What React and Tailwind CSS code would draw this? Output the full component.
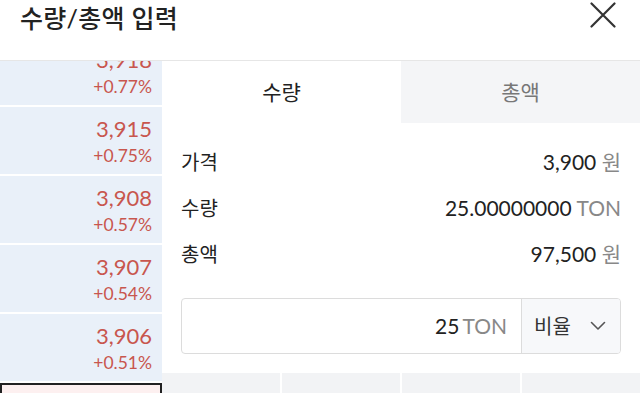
import React from 'react';

const rows = [
    { price: '3,918', rate: '+0.77%' },
    { price: '3,915', rate: '+0.75%' },
    { price: '3,908', rate: '+0.57%' },
    { price: '3,907', rate: '+0.54%' },
    { price: '3,906', rate: '+0.51%' },
];

const summary = [
    { label: '가격', value: '3,900', unit: '원' },
    { label: '수량', value: '25.00000000', unit: 'TON' },
    { label: '총액', value: '97,500', unit: '원' },
];

export default function App() {
    return (
        <div className="w-[640px] h-[393px] overflow-hidden bg-white text-[#222] font-['Lato','Noto_Sans_CJK_KR',sans-serif]">
            {/* header */}
            <div className="h-[61px] border-b border-[#e6e6e6] flex items-start justify-between pl-5 pr-[24px]">
                <h1 className="text-[25px] leading-[36px] font-medium tracking-[0.3px]">수량/총액 입력</h1>
                <svg width="26" height="26" viewBox="0 0 26 26" className="mt-[2px]">
                    <path d="M1.5 1.5 L24.5 24.5 M24.5 1.5 L1.5 24.5" stroke="#333" strokeWidth="2.2" strokeLinecap="round" />
                </svg>
            </div>

            <div className="flex h-[332px] overflow-hidden">
                {/* order book */}
                <div className="w-[162px] shrink-0 flex flex-col gap-[2px] overflow-hidden">
                    {rows.map((r, i) => (
                        <div key={r.price} className={`h-[67px] shrink-0 bg-[#e9f0f9] flex flex-col items-end pt-[10px] pr-[10px] text-[#c8564e] ${i === 0 ? '-mt-[23px]' : ''}`}>
                            <span className="text-[22px] leading-[24px]">{r.price}</span>
                            <span className="text-[17.5px] leading-[29px]">{r.rate}</span>
                        </div>
                    ))}
                    <div className="h-[67px] shrink-0 bg-[#fdf0f0] border-2 border-[#222]" />
                </div>

                {/* form */}
                <div className="flex-1 flex flex-col overflow-hidden">
                    <div className="h-[62px] shrink-0 flex">
                        <div className="flex-1 flex items-center justify-center text-[21px] text-[#222]">수량</div>
                        <div className="flex-1 flex items-center justify-center text-[21px] text-[#777] bg-[#f4f5f7]">총액</div>
                    </div>

                    <div className="shrink-0 px-[19px] pt-[16px]">
                        {summary.map(s => (
                            <div key={s.label} className="h-[46px] flex items-center justify-between">
                                <span className="text-[20px]">{s.label}</span>
                                <span className="text-[21px]">
                                    {s.value} <span className="text-[#888]">{s.unit}</span>
                                </span>
                            </div>
                        ))}

                        <div className="mt-[21px] h-[56px] flex border border-[#dcdcdc] rounded-[4px] overflow-hidden">
                            <div className="flex-1 flex items-center justify-end pr-[14px] text-[21px]">
                                25<span className="ml-[3px] text-[#888]">TON</span>
                            </div>
                            <div className="w-[99px] flex items-center justify-between pl-[12px] pr-[14px] bg-[#f7f8fa] border-l border-[#dcdcdc]">
                                <span className="text-[20px] text-[#333]">비율</span>
                                <svg width="16" height="10" viewBox="0 0 16 10">
                                    <path d="M1.5 1.5 L8 8 L14.5 1.5" fill="none" stroke="#555" strokeWidth="1.6" strokeLinecap="round" strokeLinejoin="round" />
                                </svg>
                            </div>
                        </div>
                    </div>

                    <div className="mt-[19px] shrink-0 flex gap-[2px] h-[40px]">
                        <div className="flex-1 bg-[#f2f3f5]" />
                        <div className="flex-1 bg-[#f2f3f5]" />
                        <div className="flex-1 bg-[#f2f3f5]" />
                        <div className="flex-1 bg-[#f2f3f5]" />
                    </div>
                </div>
            </div>
        </div>
    );
}
